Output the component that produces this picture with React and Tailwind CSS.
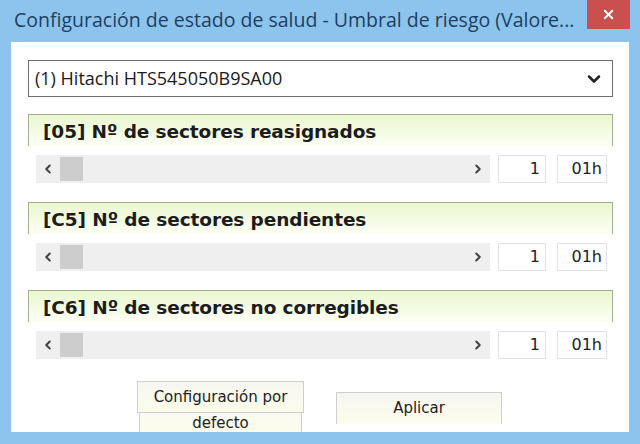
import { X, ChevronDown, ChevronLeft, ChevronRight } from 'lucide-react';

const sections = [
    { code: '05', label: 'Nº de sectores reasignados', value: '1', hex: '01h' },
    { code: 'C5', label: 'Nº de sectores pendientes', value: '1', hex: '01h' },
    { code: 'C6', label: 'Nº de sectores no corregibles', value: '1', hex: '01h' },
];

const uiFont = { fontFamily: '"DejaVu Sans", "Liberation Sans", sans-serif' };
const segoe = { fontFamily: '"Open Sans", "Noto Sans", sans-serif' };

function Section({ code, label, value, hex }) {
    return (
        <div className="flex flex-col">
            {/* header strip */}
            <div className="h-[32px] border-x border-t border-[#9fb08c] bg-gradient-to-b from-[#eaf8d2] via-[#f3fbe0] to-[#fdfff6] pl-[14px] pt-[3px] flex items-center">
                <span className="text-[18.5px] font-bold text-[#1c1c1c] tracking-[-0.1px]" style={uiFont}>
                    [{code}] {label}
                </span>
            </div>
            <div className="mt-[9px] flex items-center h-[28px] pl-[8px]">
                {/* scrollbar */}
                <div className="w-[454px] h-[28px] bg-[#efefef] flex items-center">
                    <div className="w-[24px] flex justify-center text-[#444]">
                        <ChevronLeft size={14} strokeWidth={3.5} />
                    </div>
                    <div className="w-[23px] h-[24px] bg-[#cdcdcd]" />
                    <div className="flex-1" />
                    <div className="w-[24px] flex justify-center text-[#444]">
                        <ChevronRight size={14} strokeWidth={3.5} />
                    </div>
                </div>
                <div className="ml-[8px] w-[48px] h-[28px] border border-[#e2e2e2] flex items-center justify-end pr-[5px] text-[16px] text-[#222]" style={uiFont}>
                    {value}
                </div>
                <div className="ml-[11px] w-[50px] h-[28px] border border-[#e2e2e2] flex items-center justify-end pr-[4px] text-[16px] text-[#222]" style={uiFont}>
                    {hex}
                </div>
            </div>
        </div>
    );
}

export default function App() {
    return (
        <div className="w-[640px] h-[444px] overflow-hidden bg-[#8dc4ee] flex flex-col">
            {/* title bar */}
            <div className="h-[42px] flex items-start shrink-0">
                <span className="pl-[14px] pt-[5px] text-[19.5px] text-[#1d3f61] whitespace-nowrap" style={segoe}>
                    Configuración de estado de salud - Umbral de riesgo (Valore...
                </span>
                <div className="ml-auto mr-[10px] w-[43px] h-[29px] bg-[#c9504f] flex items-center justify-center text-white shrink-0">
                    <X size={15} strokeWidth={3.2} />
                </div>
            </div>

            {/* client area */}
            <div className="flex-1 mx-[11px] mb-[12px] bg-white overflow-hidden flex flex-col pl-[17px] pr-[16px] pt-[18px]">
                {/* drive selector */}
                <div className="h-[37px] border border-[#6e6e6e] flex items-center pl-[6px] pr-[8px] shrink-0">
                    <span className="text-[18px] text-[#1a1a1a]" style={segoe}>
                        (1) Hitachi HTS545050B9SA00
                    </span>
                    <ChevronDown size={20} strokeWidth={3} className="ml-auto text-[#222]" />
                </div>

                <div className="mt-[17px] flex flex-col gap-[19px] shrink-0">
                    {sections.map(s => <Section key={s.code} {...s} />)}
                </div>

                {/* buttons */}
                <div className="mt-[22px] flex items-start pl-[109px] shrink-0">
                    <div className="w-[167px] flex flex-col" style={uiFont}>
                        <div className="h-[32px] border border-[#cfcfcf] bg-gradient-to-b from-[#f7f7f3] to-[#fbfce9] flex items-center justify-center text-[15px] text-[#222]">
                            Configuración por
                        </div>
                        <div className="mx-[2px] h-[26px] border-x border-[#cfcfcf] bg-gradient-to-b from-[#fafaf2] to-[#fbfce9] flex items-start justify-center text-[15px] text-[#222] leading-[20px]">
                            defecto
                        </div>
                    </div>
                    <div className="ml-[32px] mt-[11px] w-[166px] h-[32px] border-x border-t border-[#cfcfcf] bg-gradient-to-b from-[#f6f6f2] to-[#fcfdec] flex items-center justify-center text-[15px] text-[#222]" style={uiFont}>
                        Aplicar
                    </div>
                </div>
            </div>
        </div>
    );
}
